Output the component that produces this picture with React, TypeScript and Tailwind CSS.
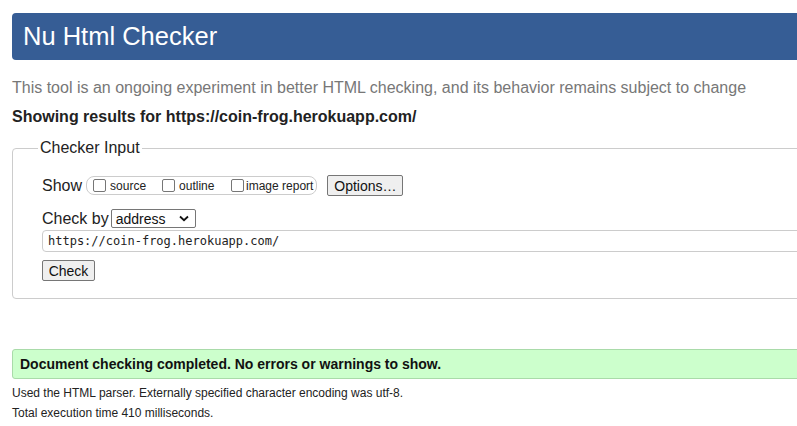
import React from "react";

const sans = "font-['Liberation_Sans',Arial,sans-serif]";

function Box({ label, width, gap }: { label: string; width: string; gap: string }) {
  return (
    <label className={`flex items-center ${gap} ${width}`}>
      <span className="h-[13px] w-[13px] shrink-0 rounded-[2px] border border-[#767676] bg-white" />
      <span className="text-[12px] leading-none text-[#222]">{label}</span>
    </label>
  );
}

export default function App() {
  return (
    <div className={`w-[797px] h-[426px] overflow-hidden bg-white ${sans}`}>
      <div className="w-[860px] pl-[12px] pt-[13px]">
        {/* Title bar */}
        <header className="flex h-[47px] items-center rounded-l-[4px] bg-[#365d95] pl-[11px]">
          <h1 className="text-[25.5px] leading-none text-white">Nu Html Checker</h1>
        </header>

        <p className="mt-[18px] text-[16px] leading-[20px] text-[#777]">
          This tool is an ongoing experiment in better HTML checking, and its behavior remains subject to change
        </p>
        <p className="mt-[9px] text-[16px] font-bold leading-[20px] text-[#222]">
          Showing results for https://coin-frog.herokuapp.com/
        </p>

        {/* Checker form */}
        <fieldset className="mt-[12px] rounded-[4px] border border-[#ccc] pb-[15px] pl-[29px]">
          <legend className="-ml-[4px] px-[2px] text-[16px] leading-[18px] text-[#222]">Checker Input</legend>

          <div className="mt-[18px] flex h-[21px] items-center">
            <span className="text-[16px] text-[#222]">Show</span>
            <div className="ml-[4px] flex h-[19px] items-center rounded-[8px] border border-[#ccc] pl-[6px] pr-[3px]">
              <Box label="source" width="w-[69px]" gap="gap-[4px]" />
              <Box label="outline" width="w-[69px]" gap="gap-[4px]" />
              <Box label="image report" width="" gap="gap-[2px]" />
            </div>
            <button className="ml-[10px] h-[21px] w-[76px] rounded-[2px] border border-[#767676] bg-[#efefef] text-[14px] text-[#111]">
              Options…
            </button>
          </div>

          <div className="mt-[13px] flex h-[19px] items-center">
            <span className="text-[16px] text-[#222]">Check by</span>
            <div className="ml-[2px] flex h-[19px] w-[85px] items-center justify-between rounded-[2px] border border-[#767676] bg-white pl-[4px] pr-[6px]">
              <span className="text-[14px] leading-none text-[#111]">address</span>
              <svg width="10" height="7" viewBox="0 0 10 7">
                <path d="M1 1.5 L5 5.2 L9 1.5" fill="none" stroke="#111" strokeWidth="1.8" />
              </svg>
            </div>
          </div>

          <div className="mt-[2px] flex h-[22px] items-center rounded-[4px] border border-[#ccc] pl-[5px]">
            <span className="font-['DejaVu_Sans_Mono',monospace] text-[12px] leading-none text-[#222]">
              https://coin-frog.herokuapp.com/
            </span>
          </div>

          <button className="mt-[8px] h-[21px] w-[53px] rounded-[2px] border border-[#767676] bg-[#efefef] text-[14px] text-[#111]">
            Check
          </button>
        </fieldset>

        {/* Result */}
        <div className="mt-[50px] flex h-[30px] items-center rounded-l-[3px] border border-[#a9dba9] bg-[#ccffcc] pl-[7px]">
          <span className="text-[14px] font-bold text-[#111]">
            Document checking completed. No errors or warnings to show.
          </span>
        </div>
        <p className="mt-[6px] text-[12px] leading-[16px] text-[#222]">
          Used the HTML parser. Externally specified character encoding was utf-8.
        </p>
        <p className="mt-[4px] text-[12px] leading-[16px] text-[#222]">Total execution time 410 milliseconds.</p>
      </div>
    </div>
  );
}
